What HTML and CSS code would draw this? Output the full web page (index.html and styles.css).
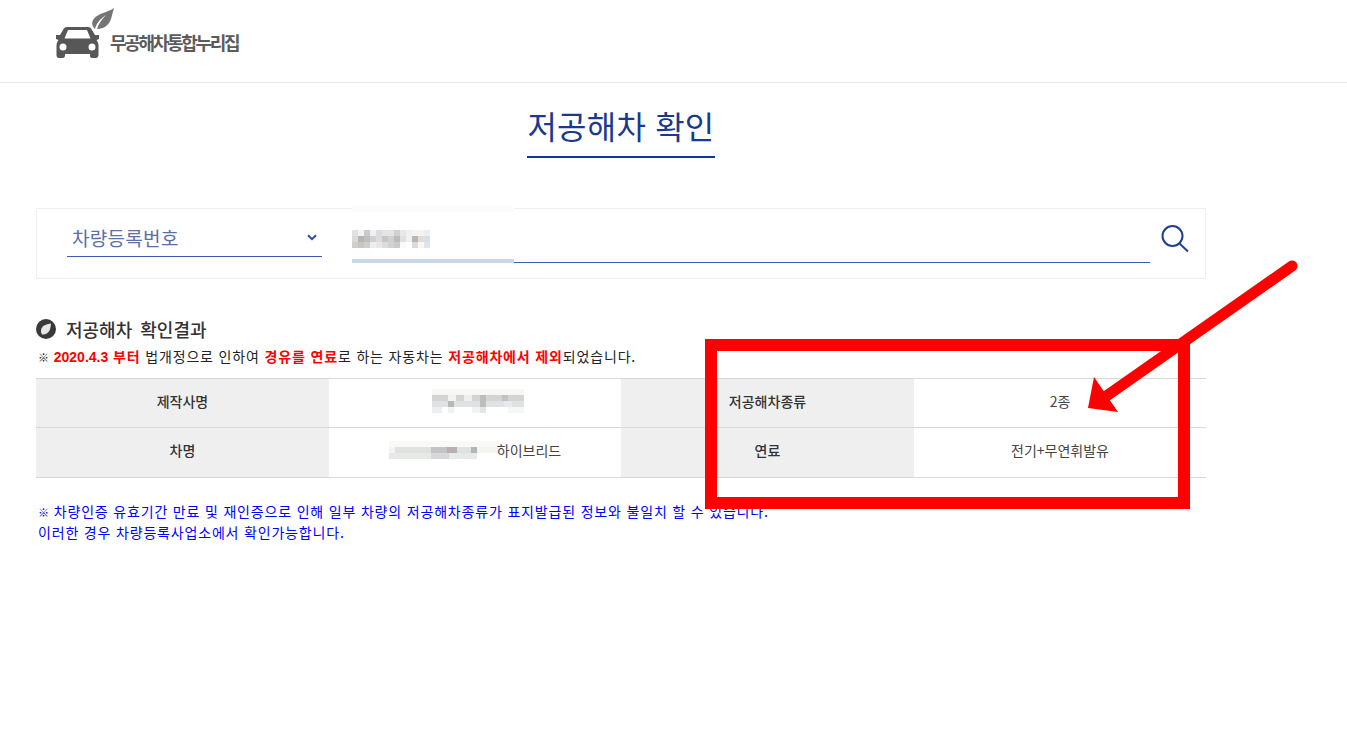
FILE: index.html
```html
<!DOCTYPE html>
<html lang="ko">
<head>
<meta charset="utf-8">
<title>저공해차 확인</title>
<link rel="stylesheet" href="styles.css">
</head>
<body>
<header class="site-header">
  <div class="logo">
    <svg class="logo-mark" width="60" height="50" viewBox="0 0 60 50">
      <path fill="#757575" d="M59 0C52 5 42 5 38 12C36 16 38 19 40 21C41 16 45 11 51 7C46 12 43 17 42 21C49 21 54 17 56 11C57 7 58 4 59 0Z"/>
      <path fill="#575757" fill-rule="evenodd" d="M12 19H33C35 19 36 20 37 22L40 27H44V31L41.500 32C43 34 43.500 36 43.500 38V47C43.500 49 42 50 41 50H37C35.500 50 35 49 35 47.500V46H10V47.500C10 49 9 50 8 50H4C2.500 50 1.500 49 1.500 47V38C1.500 36 2 34 3.500 32L1 31V27H5L8 22C9 20 10 19 12 19ZM13 22L9.500 30.500H35.500L32 22ZM8 35.500a3.500 3.500 0 1 0 0 7a3.500 3.500 0 0 0 0-7ZM37 35.500a3.500 3.500 0 1 0 0 7a3.500 3.500 0 0 0 0-7Z"/>
    </svg>
    <span class="logo-text">무공해차통합누리집</span>
  </div>
</header>

<main class="page">
  <div class="title-row"><h1 class="title">저공해차 확인</h1></div>

  <section class="search">
    <div class="select">
      <span>차량등록번호</span>
      <svg width="10" height="7" viewBox="0 0 10 7"><path d="M1 1.200l4 4 4-4" fill="none" stroke="#2f4f9f" stroke-width="2"/></svg>
    </div>
    <div class="field">
      <span class="field-cap"></span>
      <svg class="field-blur" width="78" height="18" viewBox="0 0 78 18" shape-rendering="crispEdges">
        <rect x="0" y="0" width="6" height="6" fill="#e4e2de"/><rect x="6" y="0" width="6" height="6" fill="#f2f2f0"/><rect x="12" y="0" width="6" height="6" fill="#c9c9c9"/><rect x="18" y="0" width="6" height="6" fill="#f0f0f0"/><rect x="24" y="0" width="6" height="6" fill="#dcdcdc"/><rect x="30" y="0" width="6" height="6" fill="#e4e4e4"/><rect x="36" y="0" width="6" height="6" fill="#e6e4e2"/><rect x="42" y="0" width="6" height="6" fill="#d0d0ce"/><rect x="48" y="0" width="6" height="6" fill="#e8e8e8"/><rect x="54" y="0" width="6" height="6" fill="#f0f0f0"/><rect x="60" y="0" width="6" height="6" fill="#f8f2ec"/><rect x="66" y="0" width="6" height="6" fill="#f4f4f6"/><rect x="72" y="0" width="6" height="6" fill="#eceef6"/>
        <rect x="0" y="6" width="6" height="6" fill="#dcdad6"/><rect x="6" y="6" width="6" height="6" fill="#b8b4b0"/><rect x="12" y="6" width="6" height="6" fill="#bcc0c4"/><rect x="18" y="6" width="6" height="6" fill="#ccd2d6"/><rect x="24" y="6" width="6" height="6" fill="#e0dad8"/><rect x="30" y="6" width="6" height="6" fill="#c4c6c8"/><rect x="36" y="6" width="6" height="6" fill="#d0d0d0"/><rect x="42" y="6" width="6" height="6" fill="#bcbcc0"/><rect x="48" y="6" width="6" height="6" fill="#e0e0e0"/><rect x="54" y="6" width="6" height="6" fill="#f0f0f0"/><rect x="60" y="6" width="6" height="6" fill="#b4b8bc"/><rect x="66" y="6" width="6" height="6" fill="#e4dccf"/><rect x="72" y="6" width="6" height="6" fill="#d8deee"/>
        <rect x="0" y="12" width="6" height="6" fill="#d0cec8"/><rect x="6" y="12" width="6" height="6" fill="#c8c6c2"/><rect x="12" y="12" width="6" height="6" fill="#d0cec8"/><rect x="18" y="12" width="6" height="6" fill="#eceff2"/><rect x="24" y="12" width="6" height="6" fill="#e6e8e8"/><rect x="30" y="12" width="6" height="6" fill="#dcdcd8"/><rect x="36" y="12" width="6" height="6" fill="#d4d2ce"/><rect x="42" y="12" width="6" height="6" fill="#c8cacc"/><rect x="48" y="12" width="6" height="6" fill="#fafafa"/><rect x="54" y="12" width="6" height="6" fill="#ffffff"/><rect x="60" y="12" width="6" height="6" fill="#d8dadc"/><rect x="66" y="12" width="6" height="6" fill="#fbf6ee"/><rect x="72" y="12" width="6" height="6" fill="#dfe3f0"/>
      </svg>
      <span class="field-bar"></span>
    </div>
    <svg class="search-icon" width="30" height="30" viewBox="0 0 30 30">
      <circle cx="12.500" cy="12" r="10" fill="none" stroke="#1f3f94" stroke-width="2"/>
      <path d="M19.500 19.500l8.500 8" fill="none" stroke="#1f3f94" stroke-width="2"/>
    </svg>
  </section>

  <section class="result">
    <h2 class="result-title">
      <svg width="20" height="20" viewBox="0 0 20 20"><circle cx="10" cy="10" r="10" fill="#3a3a3a"/><path d="M15 4.500c-4 .5-8 1.500-9.500 5-1 2.500-.5 4.500.5 6 3 .5 6-1 7.500-4 1-2 1.300-4.500 1.500-7z" fill="#e6e6e6"/></svg>
      <span>저공해차 확인결과</span>
    </h2>
    <p class="notice"><span class="mark">※</span> <b class="latin">2020.4.3</b> <b>부터</b> 법개정으로 인하여 <b>경유를 연료</b>로 하는 자동차는 <b>저공해차에서 제외</b>되었습니다.</p>
    <div class="table">
      <div class="th">제작사명</div>
      <div class="td">
        <svg class="maker-blur" width="92" height="24" viewBox="0 0 92 24" shape-rendering="crispEdges">
          <rect x="0" y="0" width="92" height="6" fill="#f7f7f6"/>
          <rect x="0" y="6" width="92" height="6" fill="#d4d4d2"/><rect x="16" y="6" width="8" height="6" fill="#f2f2f2"/><rect x="32" y="6" width="8" height="6" fill="#eeeeee"/><rect x="48" y="6" width="6" height="6" fill="#bdbdbd"/><rect x="70" y="6" width="6" height="6" fill="#c4c2c0"/>
          <rect x="0" y="12" width="92" height="6" fill="#dfe1e3"/><rect x="16" y="12" width="6" height="6" fill="#b8b8b6"/><rect x="48" y="12" width="6" height="6" fill="#bdbdbd"/><rect x="72" y="12" width="8" height="6" fill="#e6eaee"/>
          <rect x="0" y="18" width="10" height="6" fill="#eeeeee"/><rect x="16" y="18" width="6" height="6" fill="#f2f2f2"/><rect x="40" y="18" width="8" height="6" fill="#f2f2f2"/><rect x="48" y="18" width="6" height="6" fill="#e4e4e4"/><rect x="76" y="18" width="16" height="6" fill="#f6f6f6"/>
        </svg>
      </div>
      <div class="th">저공해차종류</div>
      <div class="td">2종</div>
      <div class="th">차명</div>
      <div class="td">
        <svg class="model-blur" width="110" height="18" viewBox="0 0 110 18" shape-rendering="crispEdges">
          <rect x="0" y="0" width="110" height="6" fill="#f9f9f8"/>
          <rect x="0" y="6" width="110" height="6" fill="#e0e2e0"/><rect x="0" y="6" width="6" height="6" fill="#f4f4f4"/><rect x="42" y="6" width="24" height="6" fill="#c4c4c6"/><rect x="58" y="6" width="10" height="6" fill="#b8b0b0"/><rect x="82" y="6" width="6" height="6" fill="#b0b6bc"/><rect x="88" y="6" width="22" height="6" fill="#f6f4f0"/>
          <rect x="0" y="12" width="88" height="6" fill="#e8e8e6"/><rect x="42" y="12" width="18" height="6" fill="#d8d8d8"/><rect x="60" y="12" width="14" height="6" fill="#e6eaea"/>
        </svg><span>하이브리드</span>
      </div>
      <div class="th">연료</div>
      <div class="td">전기+무연휘발유</div>
    </div>
    <p class="foot"><span class="mark">※</span> 차량인증 유효기간 만료 및 재인증으로 인해 일부 차량의 저공해차종류가 표지발급된 정보와 불일치 할 수 있습니다.<br>이러한 경우 차량등록사업소에서 확인가능합니다.</p>
  </section>
</main>

<svg class="annotation" width="1347" height="746" viewBox="0 0 1347 746">
  <rect x="711" y="345" width="473" height="158" fill="none" stroke="#ff0000" stroke-width="12"/>
  <path d="M1292 266L1105 397" fill="none" stroke="#ff0000" stroke-width="11" stroke-linecap="round"/>
  <path d="M1094 377L1088 408 1118 412z" fill="#ff0000"/>
</svg>
</body>
</html>
```
FILE: styles.css
```css
* { box-sizing: border-box; }
html, body { margin: 0; padding: 0; }
body {
  background: #fff;
  color: #333;
  font-family: "Noto Sans CJK KR", "Noto Sans", sans-serif;
  width: 1347px;
  height: 746px;
  overflow: hidden;
  position: relative;
}
.site-header {
  height: 83px;
  border-bottom: 1px solid #e9e9e9;
  padding: 8px 0 0 55px;
}
.logo { display: flex; align-items: flex-end; }
.logo-mark { display: block; margin-right: -5px; flex: none; }
.logo-text {
  font-size: 18px;
  font-weight: 700;
  color: #5b5b5b;
  letter-spacing: -2.300px;
  line-height: 26px;
  margin-bottom: 3px;
}
.page { width: 1170px; margin-left: 36px; }
.title-row { display: flex; justify-content: center; padding-top: 19px; }
.title {
  margin: 0;
  font-size: 32px;
  font-weight: 400;
  line-height: 46px;
  color: #1a3a8f;
  padding-bottom: 8px;
  border-bottom: 2px solid #0f3696;
  letter-spacing: 0.2px;
}
.search {
  margin-top: 50px;
  height: 71px;
  border: 1px solid #eeeeee;
  display: flex;
  align-items: flex-start;
  position: relative;
}
.select {
  width: 255px;
  margin: 12px 0 0 30px;
  height: 36px;
  border-bottom: 1px solid #3a5cb4;
  padding: 0 5px 2px 5px;
  display: flex;
  align-items: center;
  justify-content: space-between;
  color: #5a6ea8;
  font-size: 19px;
  letter-spacing: 0.3px;
}
.field {
  width: 798px;
  margin: 0 0 0 30px;
  height: 54px;
  border-bottom: 1px solid #3a5cb4;
  position: relative;
}
.field-cap {
  position: absolute;
  left: 0;
  top: -3px;
  width: 162px;
  height: 6px;
  background: #fcfcfc;
}
.field-blur { position: absolute; left: 0; top: 21px; }
.field-bar {
  position: absolute;
  left: 0;
  bottom: -1px;
  width: 162px;
  height: 4px;
  background: #ccd6ea;
}
.search-icon { margin: 15px 0 0 10px; flex: none; }
.result { margin-top: 38px; }
.result-title {
  margin: 0;
  display: flex;
  align-items: center;
  gap: 10px;
  font-size: 18px;
  font-weight: 500;
  word-spacing: 3px;
  line-height: 24px;
  color: #333;
  height: 24px;
}
.notice {
  margin: 6px 0 0;
  padding-left: 2px;
  font-size: 14px;
  letter-spacing: 0.84px;
  line-height: 18px;
  color: #222;
  height: 20px;
}
.mark { font-size: 11px; letter-spacing: 0; }
.notice b { color: #ff0000; font-weight: 700; }
.notice .latin { font-family: "Liberation Sans", sans-serif; letter-spacing: 0; }
.table {
  margin-top: 11px;
  display: grid;
  grid-template-columns: 293px 292px 293px 292px;
  grid-template-rows: 49px 50px;
  border-top: 1px solid #d8d8d8;
}
.th, .td {
  display: flex;
  align-items: center;
  justify-content: center;
  font-size: 14px;
  padding-bottom: 5px;
  border-bottom: 1px solid #d8d8d8;
}
.th { background: #efefef; font-weight: 500; color: #333; }
.td { background: #fff; font-weight: 400; color: #444; }
.maker-blur { margin-left: 6px; }
.model-blur { margin-right: -2px; }
.foot {
  margin: 23px 0 0;
  padding-left: 2px;
  font-size: 14px;
  letter-spacing: 0.82px;
  line-height: 20px;
  color: #0000ff;
}
.annotation { position: absolute; left: 0; top: 0; pointer-events: none; }
```
